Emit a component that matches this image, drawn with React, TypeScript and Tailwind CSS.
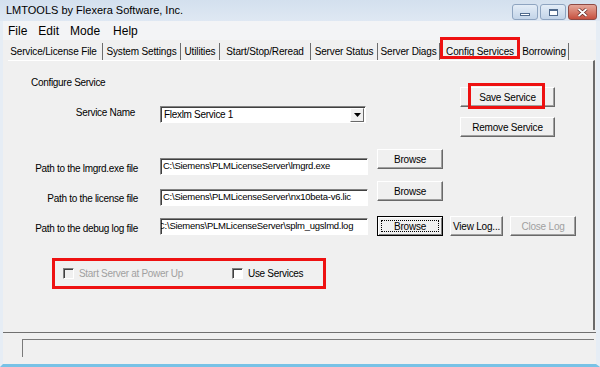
import React from "react"

const font = "font-['Liberation_Sans',Arial,sans-serif]"

function Btn({
  children,
  className = "",
  disabled = false,
  focused = false,
}: {
  children: React.ReactNode
  className?: string
  disabled?: boolean
  focused?: boolean
}) {
  return (
    <div
      className={`relative flex h-[20px] items-center justify-center border bg-[#f0f0f0] text-[10px] tracking-[-0.2px] ${
        focused
          ? "border-[#000] shadow-[inset_1px_1px_#fff,inset_-1px_-1px_#808080]"
          : "border-t-white border-l-white border-r-[#696969] border-b-[#696969] shadow-[inset_-1px_-1px_#a0a0a0]"
      } ${disabled ? "text-[#a0a0a0]" : "text-black"} ${className}`}
    >
      {focused && <span className="absolute inset-[3px] border border-dotted border-black" />}
      <span className="relative">{children}</span>
    </div>
  )
}

function Field({ text, className = "", shift = 0 }: { text: string; className?: string; shift?: number }) {
  return (
    <div
      className={`flex h-[17px] w-[208px] items-center overflow-hidden border border-t-[#828282] border-l-[#828282] border-r-white border-b-white bg-white shadow-[inset_1px_1px_#404040] text-[9.5px] tracking-[-0.25px] whitespace-nowrap ${className}`}
    >
      <span className="pl-[2px]" style={{ marginLeft: -shift }}>
        {text}
      </span>
    </div>
  )
}

function CheckBox({ disabled = false }: { disabled?: boolean }) {
  return (
    <span
      className={`inline-block h-[11px] w-[11px] border border-t-[#808080] border-l-[#808080] border-r-white border-b-white shadow-[inset_1px_1px_#404040] ${
        disabled ? "bg-[#f0f0f0]" : "bg-white"
      }`}
    />
  )
}

const tabs = [
  { label: "Service/License File", w: "w-[98px]" },
  { label: "System Settings", w: "w-[78px]" },
  { label: "Utilities", w: "w-[39px]" },
  { label: "Start/Stop/Reread", w: "w-[91px]" },
  { label: "Server Status", w: "w-[67px]" },
  { label: "Server Diags", w: "w-[62px]" },
  { label: "Config Services", w: "w-[80px]", active: true },
  { label: "Borrowing", w: "w-[49px]" },
]

export default function App() {
  return (
    <div className={`flex h-[367px] w-[600px] flex-col overflow-hidden bg-[#dde7f3] text-black ${font}`}>
      {/* Title bar */}
      <div className="flex h-[21px] items-center bg-gradient-to-b from-[#d3e0ee] to-[#dfe8f3] pl-[6px]">
        <span className="text-[11px] leading-none">LMTOOLS by Flexera Software, Inc.</span>
        <div className="ml-auto mr-[3px] flex items-start gap-[2px] self-start pt-[4px]">
          <div className="flex h-[16px] w-[26px] items-center justify-center rounded-[3px] border border-[#8ea4c0] bg-gradient-to-b from-[#e4edf7] to-[#c3d4e8]">
            <span className="mt-[4px] h-[3px] w-[10px] border border-[#506a8c] bg-white" />
          </div>
          <div className="flex h-[16px] w-[26px] items-center justify-center rounded-[3px] border border-[#8ea4c0] bg-gradient-to-b from-[#e4edf7] to-[#c3d4e8]">
            <span className="h-[7px] w-[9px] border border-[#506a8c] border-t-2 bg-white" />
          </div>
          <div className="flex h-[16px] w-[29px] items-center justify-center rounded-[3px] border border-[#8e4a44] bg-gradient-to-b from-[#e4a79a] to-[#c6503f]">
            <svg width="11" height="9" viewBox="0 0 11 9">
              <path d="M1.5 1 L9.5 8 M9.5 1 L1.5 8" stroke="#5a2420" strokeWidth="3.2" />
              <path d="M1.5 1 L9.5 8 M9.5 1 L1.5 8" stroke="#fff" strokeWidth="1.8" />
            </svg>
          </div>
        </div>
      </div>

      {/* Window body */}
      <div className="flex flex-1 flex-col border-l-[3px] border-r-[4px] border-b-[3px] border-l-[#e6edf5] border-r-[#e6edf5] border-b-[#78c2e6] bg-[#f0f0f0]">
        {/* Menu */}
        <div className="flex h-[19px] items-center gap-[11px] bg-[#f3f4f6] pl-[5px] text-[12px] leading-none">
          <span>File</span>
          <span>Edit</span>
          <span>Mode</span>
          <span className="ml-[2px]">Help</span>
        </div>

        {/* Tabs */}
        <div className="flex h-[20px] items-end pl-[2px] text-[10px] tracking-[-0.15px]">
          {tabs.map((t) => (
            <div
              key={t.label}
              className={`relative flex h-[17px] ${t.w} items-center justify-center whitespace-nowrap ${
                t.active ? "" : "border-r border-r-[#6d6d6d]"
              }`}
            >
              {t.label}
              {t.active && (
                <span className="absolute -top-[6px] bottom-[1px] left-0 right-0 border-[3px] border-[#ee1111]" />
              )}
            </div>
          ))}
        </div>

        {/* Panel */}
        <div className="ml-[5px] mr-[1px] flex h-[270px] flex-col border-t border-r-2 border-t-white border-r-[#6a6a6a] text-[10px] tracking-[-0.3px]">
          {/* Top section */}
          <div className="flex">
            <div className="flex flex-col">
              <div className="mt-[16px] h-[12px] pl-[23px] leading-[12px]">Configure Service</div>
              <div className="mt-[17px] flex items-start">
                <div className="w-[127px] pt-[1px] text-right leading-[12px]">Service Name</div>
                <div className="ml-[25px] flex h-[17px] w-[206px] items-center border border-t-[#828282] border-l-[#828282] border-r-white border-b-white bg-white shadow-[inset_1px_1px_#404040]">
                  <span className="flex-1 pl-[3px]">Flexlm Service 1</span>
                  <div className="mr-[1px] flex h-[14px] w-[14px] items-center justify-center border border-t-white border-l-white border-r-[#696969] border-b-[#696969] bg-[#f0f0f0]">
                    <svg width="7" height="4" viewBox="0 0 7 4">
                      <path d="M0 0 H7 L3.5 4 Z" fill="#000" />
                    </svg>
                  </div>
                </div>
              </div>
            </div>
            <div className="ml-auto mr-[38px] flex flex-col gap-[10px] pt-[26px]">
              <Btn className="w-[95px]">
                Save Service
                <span className="absolute -top-[7px] -bottom-[4px] -left-[11px] -right-[9px] border-[3px] border-[#ee1111]" />
              </Btn>
              <Btn className="w-[95px]">Remove Service</Btn>
            </div>
          </div>

          {/* Path rows */}
          <div className="mt-[12px] flex h-[32px] items-start">
            <div className="mt-[14px] w-[130px] text-right leading-[12px]">Path to the lmgrd.exe file</div>
            <Field className="ml-[22px] mt-[9px]" text={"C:\\Siemens\\PLMLicenseServer\\lmgrd.exe"} />
            <Btn className="ml-[9px] w-[66px]">Browse</Btn>
          </div>
          <div className="flex h-[35px] items-start">
            <div className="mt-[12px] w-[130px] text-right leading-[12px]">Path to the license file</div>
            <Field className="ml-[22px] mt-[8px]" text={"C:\\Siemens\\PLMLicenseServer\\nx10beta-v6.lic"} />
            <Btn className="ml-[9px] w-[66px]">Browse</Btn>
          </div>
          <div className="flex h-[20px] items-start">
            <div className="mt-[7px] w-[130px] text-right leading-[12px]">Path to the debug log file</div>
            <Field className="ml-[22px] mt-[2px]" shift={5} text={"C:\\Siemens\\PLMLicenseServer\\splm_ugslmd.log"} />
            <Btn focused className="ml-[9px] w-[66px]">
              Browse
            </Btn>
            <Btn className="ml-[7px] w-[53px]">View Log...</Btn>
            <Btn disabled className="ml-[7px] w-[66px]">
              Close Log
            </Btn>
          </div>

          {/* Options */}
          <div className="ml-[44px] mt-[22px] flex h-[31px] w-[274px] items-center border-[3px] border-[#ee1111] pl-[8px]">
            <div className="flex w-[169px] items-center gap-[5px] text-[#a0a0a0]">
              <CheckBox disabled />
              <span>Start Server at Power Up</span>
            </div>
            <div className="flex items-center gap-[5px]">
              <CheckBox />
              <span>Use Services</span>
            </div>
          </div>
        </div>

        {/* Status bar */}
        <div className="mt-[2px] flex flex-1 flex-col border-t border-t-[#707070]">
          <div className="ml-[19px] mr-[2px] mt-[6px] h-[18px] border-t border-l border-t-[#7a7a7a] border-l-[#7a7a7a]" />
        </div>
      </div>
    </div>
  )
}
